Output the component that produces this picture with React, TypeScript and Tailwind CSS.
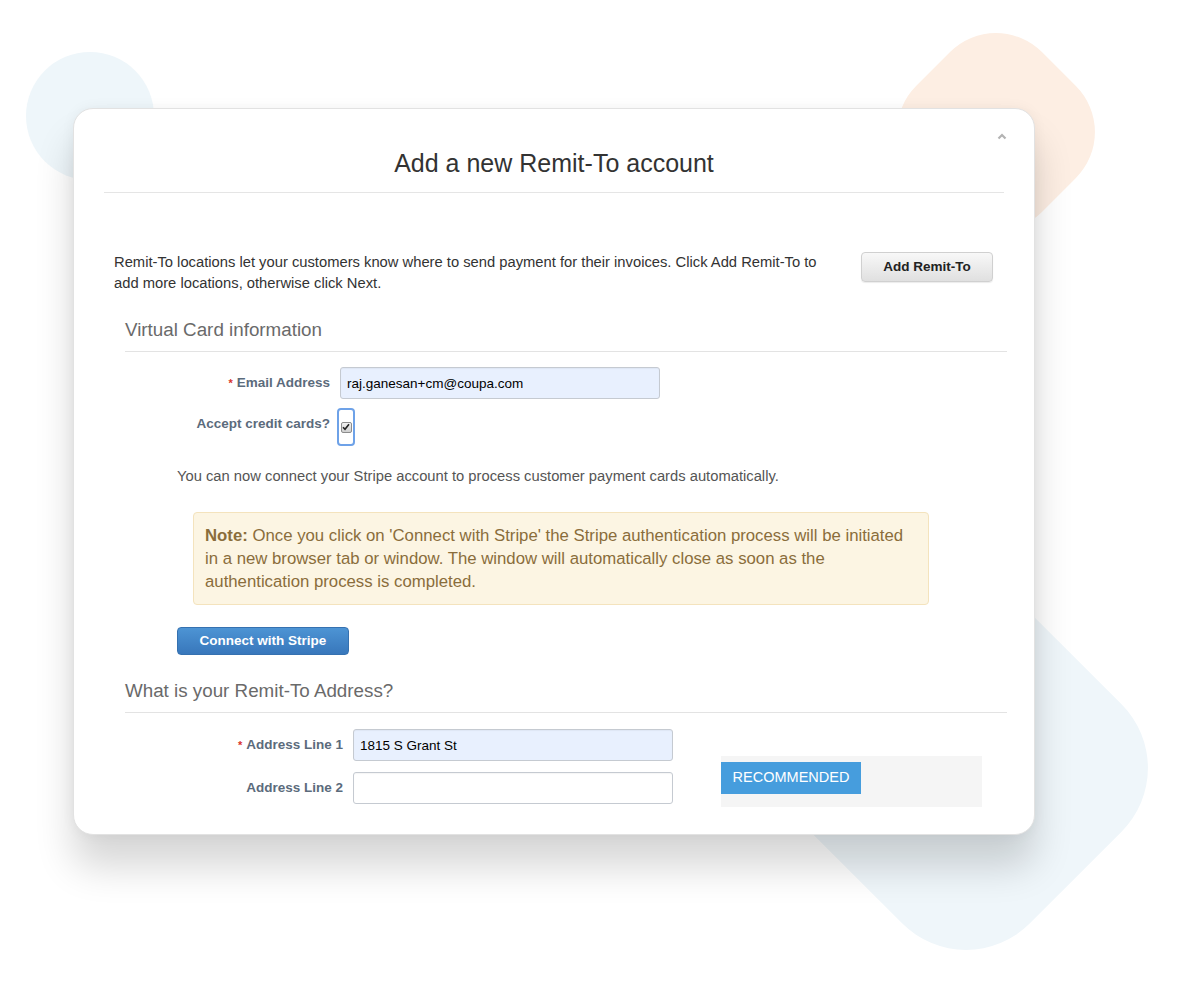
import React from "react";

const labelCls = "text-right font-bold text-[13.5px] leading-[16px] text-[#5b6b7c]";
const inputCls =
  "h-[32px] w-[320px] rounded-[3px] border border-[#c5cad1] px-[6px] text-[13.5px] text-black outline-none shadow-[inset_0_1px_1px_rgba(0,0,0,0.04)]";

const Req = () => <span className="mr-[4px] text-[11px] text-[#d9332b]">*</span>;

const SectionHeading = ({ children, className = "" }: { children: React.ReactNode; className?: string }) => (
  <h2 className={`border-b border-[#e3e3e3] pb-[10px] text-[18.8px] leading-[22px] font-normal text-[#6a6a6a] ${className}`}>
    {children}
  </h2>
);

export default function App() {
  return (
    <div className="relative h-[987px] w-[1184px] overflow-hidden bg-white font-['Liberation_Sans',Arial,sans-serif]">
      {/* decorative shapes behind the card */}
      <div className="absolute left-[26px] top-[52px] h-[128px] w-[128px] rounded-full bg-[#eef6fa]" />
      <div className="absolute left-[907px] top-[43px] h-[178px] w-[178px] rotate-45 rounded-[65px] bg-[#fdeee3]" />
      <div className="absolute left-[811px] top-[613px] h-[310px] w-[310px] rotate-45 rounded-[90px] bg-[#eff6fa]" />

      <div className="relative ml-[73px] mt-[108px] h-[727px] w-[962px] rounded-[20px] border border-[#e2e2e2] bg-white shadow-[0_32px_38px_rgba(0,0,0,0.16),0_0_14px_rgba(0,0,0,0.05)]">
        {/* collapse caret */}
        <svg className="absolute right-[27px] top-[24px]" width="10" height="7" viewBox="0 0 10 7">
          <polyline points="1.5,5.5 5,2 8.5,5.5" fill="none" stroke="#b3b3b3" strokeWidth="2.2" />
        </svg>

        <div className="mx-[30px] border-b border-[#e5e5e5] pb-[14px] pt-[40px]">
          <h1 className="text-center text-[25px] leading-[29px] font-normal text-[#333]">Add a new Remit-To account</h1>
        </div>

        <div className="ml-[40px] mr-[41px] mt-[59px] flex items-start justify-between">
          <p className="w-[716px] text-[14.75px] leading-[21px] text-[#333]">
            Remit-To locations let your customers know where to send payment for their invoices. Click Add Remit-To to add
            more locations, otherwise click Next.
          </p>
          <button className="h-[30px] w-[132px] rounded-[4px] border border-[#d0d0d0] bg-gradient-to-b from-[#f8f8f8] to-[#e0e0e0] text-[13.5px] font-bold text-[#222] shadow-[0_1px_1px_rgba(0,0,0,0.08)]">
            Add Remit-To
          </button>
        </div>

        <div className="ml-[51px] mr-[27px]">
          <SectionHeading className="mt-[25px]">Virtual Card information</SectionHeading>

          <div className="mt-[15px] flex items-center">
            <label className={`${labelCls} w-[205px]`}>
              <Req />
              Email Address
            </label>
            <input readOnly value="raj.ganesan+cm@coupa.com" className={`${inputCls} ml-[10px] bg-[#e8f0fe]`} />
          </div>

          <div className="mt-[9px] flex items-start">
            <label className={`${labelCls} mt-[8px] w-[205px]`}>Accept credit cards?</label>
            <div className="ml-[7px] flex h-[38px] w-[18px] items-center justify-center rounded-[4px] border-2 border-[#6ea2e8]">
              <span className="flex h-[11px] w-[11px] items-center justify-center rounded-[2px] border border-[#8c8c8c] bg-gradient-to-b from-[#f2f2f2] to-[#cfcfcf]">
                <svg width="8" height="8" viewBox="0 0 8 8">
                  <path d="M1 4.2 L3 6.3 L7 1.2" fill="none" stroke="#222" strokeWidth="1.6" />
                </svg>
              </span>
            </div>
          </div>

          <p className="ml-[52px] mt-[20px] text-[14.75px] leading-[20px] text-[#555]">
            You can now connect your Stripe account to process customer payment cards automatically.
          </p>

          <div className="ml-[68px] mt-[26px] w-[736px] rounded-[4px] border border-[#f4e3bd] bg-[#fcf5e3] py-[11px] pl-[11px] pr-[20px] text-[16.75px] leading-[23px] text-[#8a6d3b]">
            <strong>Note:</strong> Once you click on 'Connect with Stripe' the Stripe authentication process will be initiated
            in a new browser tab or window. The window will automatically close as soon as the authentication process is
            completed.
          </div>

          <button className="ml-[52px] mt-[22px] h-[28px] w-[172px] rounded-[4px] border border-[#3571b0] bg-gradient-to-b from-[#4d94d4] to-[#3877bb] text-[13.5px] font-bold text-white">
            Connect with Stripe
          </button>

          <SectionHeading className="mt-[25px]">What is your Remit-To Address?</SectionHeading>

          <div className="flex items-start">
            <div>
              <div className="mt-[16px] flex items-center">
                <label className={`${labelCls} w-[218px]`}>
                  <Req />
                  Address Line 1
                </label>
                <input readOnly value="1815 S Grant St" className={`${inputCls} ml-[10px] h-[31px] bg-[#e8f0fe]`} />
              </div>
              <div className="mt-[11px] flex items-center">
                <label className={`${labelCls} w-[218px]`}>Address Line 2</label>
                <input readOnly value="" className={`${inputCls} ml-[10px] h-[31px] bg-white`} />
              </div>
            </div>
            <div className="ml-[48px] mt-[43px] h-[51px] w-[261px] bg-[#f5f5f5] pt-[6px]">
              <div className="flex h-[32px] w-[140px] items-center justify-center bg-[#469ddd] text-[14.5px] text-white">
                RECOMMENDED
              </div>
            </div>
          </div>
        </div>
      </div>
    </div>
  );
}
